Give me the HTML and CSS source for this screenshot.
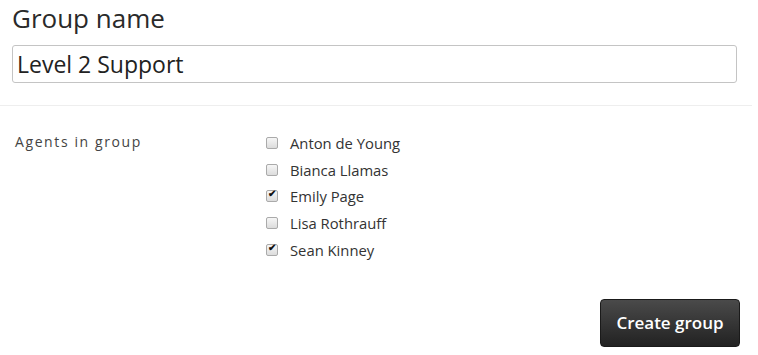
FILE: index.html
```html
<!DOCTYPE html>
<html lang="en">

<head>
    <meta charset="UTF-8">
    <title>New Group</title>
    <link rel="stylesheet" href="styles.css">
</head>

<body>
    <div class="name-section">
        <h2>Group name</h2>
        <input type="text" class="name-input" value="Level 2 Support">
    </div>

    <div class="agents-section">
        <div class="agents-label">Agents in group</div>
        <ul class="agent-list">
            <li><input type="checkbox" id="a1"><label for="a1">Anton de Young</label></li>
            <li><input type="checkbox" id="a2"><label for="a2">Bianca Llamas</label></li>
            <li><input type="checkbox" id="a3" checked><label for="a3">Emily Page</label></li>
            <li><input type="checkbox" id="a4"><label for="a4">Lisa Rothrauff</label></li>
            <li><input type="checkbox" id="a5" checked><label for="a5">Sean Kinney</label></li>
        </ul>
    </div>

    <div class="actions">
        <button class="button">Create group</button>
    </div>
</body>

</html>
```

FILE: styles.css
```css
/* Global styles */
body {
    margin: 0;
    font-family: "Open Sans", Arial, sans-serif;
    color: #333;
    background: #fff;
}

/* Group name */
.name-section {
    padding: 0 15px 22px 12px;
    border-bottom: 1px solid #eee;
    margin-right: 6px;
}

.name-section h2 {
    margin: 0 0 9px;
    font-size: 26px;
    font-weight: normal;
    line-height: 36px;
    color: #2a2a2a;
}

.name-input {
    display: block;
    box-sizing: border-box;
    width: 100%;
    height: 38px;
    padding: 0 4px;
    font-family: "Open Sans", Arial, sans-serif;
    font-size: 23px;
    color: #222;
    border: 1px solid #c4c4c4;
    border-radius: 3px;
}

/* Agents */
.agents-section {
    display: flex;
    padding: 24px 0 0 15px;
}

.agents-label {
    width: 251px;
    font-size: 14px;
    letter-spacing: 1.6px;
    color: #444;
    line-height: 24px;
}

.agent-list {
    list-style: none;
    margin: 0;
    padding: 0;
}

.agent-list li {
    display: flex;
    align-items: center;
    height: 26.6px;
    font-size: 14.8px;
    color: #333;
}

.agent-list input {
    appearance: none;
    position: relative;
    box-sizing: border-box;
    margin: 0 12px 0 0;
    width: 12px;
    height: 12px;
    border: 1px solid #aaa;
    border-radius: 2px;
    background: linear-gradient(#f6f6f6, #dcdcdc);
}

.agent-list input:checked::after {
    content: "\2714";
    position: absolute;
    left: 1px;
    top: -3px;
    font-size: 10px;
    font-weight: bold;
    color: #111;
}

/* Actions */
.actions {
    display: flex;
    justify-content: flex-end;
    padding: 36px 18px 0 0;
}

.button {
    width: 140px;
    height: 48px;
    font-family: "Open Sans", Arial, sans-serif;
    font-size: 17px;
    font-weight: 600;
    color: #fff;
    background: linear-gradient(#4a4a4a, #222);
    border: 1px solid #1a1a1a;
    border-radius: 4px;
    cursor: pointer;
}
```
